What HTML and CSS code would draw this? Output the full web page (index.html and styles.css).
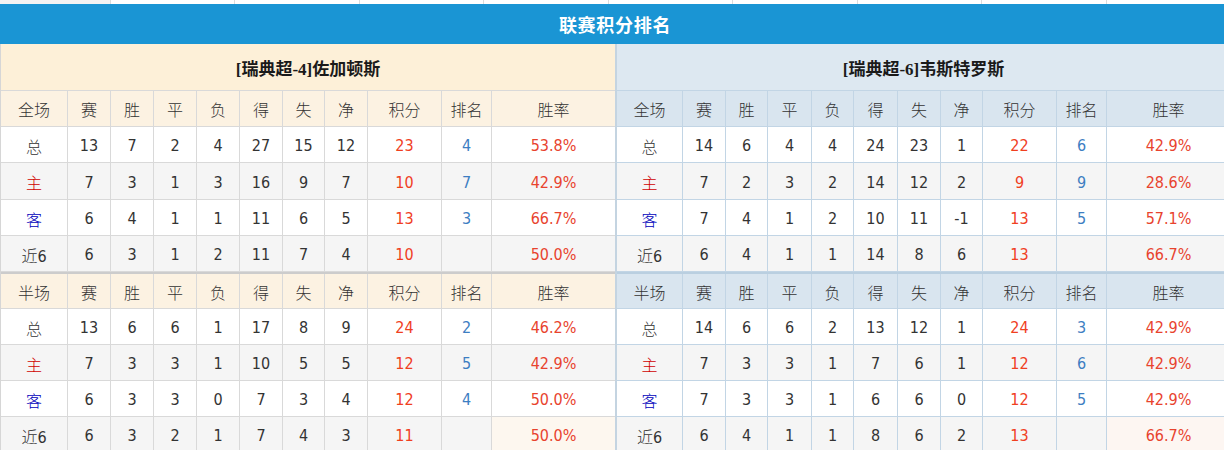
FILE: index.html
```html
<!DOCTYPE html>
<html lang="zh-CN">
<head>
<meta charset="utf-8">
<title>联赛积分排名</title>
<link rel="stylesheet" href="styles.css">
</head>
<body>
<div class="page">
  <div class="strip"><span></span><span></span><span></span><span></span><span></span><span></span><span></span><span></span><span></span><span></span></div>
  <div class="title">联赛积分排名</div>
  <div class="halves">
    <div class="side home">
      <div class="team">[瑞典超-4]佐加顿斯</div>
      <div class="sec">
        <div class="row head"><div>全场</div><div>赛</div><div>胜</div><div>平</div><div>负</div><div>得</div><div>失</div><div>净</div><div>积分</div><div>排名</div><div>胜率</div></div>
        <div class="row"><div class="lb">总</div><div>13</div><div>7</div><div>2</div><div>4</div><div>27</div><div>15</div><div>12</div><div class="pts">23</div><div class="rk">4</div><div class="pct">53.8%</div></div>
        <div class="row alt tall"><div class="lb h">主</div><div>7</div><div>3</div><div>1</div><div>3</div><div>16</div><div>9</div><div>7</div><div class="pts">10</div><div class="rk">7</div><div class="pct">42.9%</div></div>
        <div class="row"><div class="lb a">客</div><div>6</div><div>4</div><div>1</div><div>1</div><div>11</div><div>6</div><div>5</div><div class="pts">13</div><div class="rk">3</div><div class="pct">66.7%</div></div>
        <div class="row alt"><div class="lb">近6</div><div>6</div><div>3</div><div>1</div><div>2</div><div>11</div><div>7</div><div>4</div><div class="pts">10</div><div class="rk"></div><div class="pct">50.0%</div></div>
      </div>
      <div class="sec second">
        <div class="row head short"><div>半场</div><div>赛</div><div>胜</div><div>平</div><div>负</div><div>得</div><div>失</div><div>净</div><div>积分</div><div>排名</div><div>胜率</div></div>
        <div class="row"><div class="lb">总</div><div>13</div><div>6</div><div>6</div><div>1</div><div>17</div><div>8</div><div>9</div><div class="pts">24</div><div class="rk">2</div><div class="pct">46.2%</div></div>
        <div class="row alt"><div class="lb h">主</div><div>7</div><div>3</div><div>3</div><div>1</div><div>10</div><div>5</div><div>5</div><div class="pts">12</div><div class="rk">5</div><div class="pct">42.9%</div></div>
        <div class="row"><div class="lb a">客</div><div>6</div><div>3</div><div>3</div><div>0</div><div>7</div><div>3</div><div>4</div><div class="pts">12</div><div class="rk">4</div><div class="pct">50.0%</div></div>
        <div class="row alt"><div class="lb">近6</div><div>6</div><div>3</div><div>2</div><div>1</div><div>7</div><div>4</div><div>3</div><div class="pts">11</div><div class="rk"></div><div class="pct hl">50.0%</div></div>
      </div>
    </div>
    <div class="side away">
      <div class="team">[瑞典超-6]韦斯特罗斯</div>
      <div class="sec">
        <div class="row head"><div>全场</div><div>赛</div><div>胜</div><div>平</div><div>负</div><div>得</div><div>失</div><div>净</div><div>积分</div><div>排名</div><div>胜率</div></div>
        <div class="row"><div class="lb">总</div><div>14</div><div>6</div><div>4</div><div>4</div><div>24</div><div>23</div><div>1</div><div class="pts">22</div><div class="rk">6</div><div class="pct">42.9%</div></div>
        <div class="row alt tall"><div class="lb h">主</div><div>7</div><div>2</div><div>3</div><div>2</div><div>14</div><div>12</div><div>2</div><div class="pts">9</div><div class="rk">9</div><div class="pct">28.6%</div></div>
        <div class="row"><div class="lb a">客</div><div>7</div><div>4</div><div>1</div><div>2</div><div>10</div><div>11</div><div>-1</div><div class="pts">13</div><div class="rk">5</div><div class="pct">57.1%</div></div>
        <div class="row alt"><div class="lb">近6</div><div>6</div><div>4</div><div>1</div><div>1</div><div>14</div><div>8</div><div>6</div><div class="pts">13</div><div class="rk"></div><div class="pct">66.7%</div></div>
      </div>
      <div class="sec second">
        <div class="row head short"><div>半场</div><div>赛</div><div>胜</div><div>平</div><div>负</div><div>得</div><div>失</div><div>净</div><div>积分</div><div>排名</div><div>胜率</div></div>
        <div class="row"><div class="lb">总</div><div>14</div><div>6</div><div>6</div><div>2</div><div>13</div><div>12</div><div>1</div><div class="pts">24</div><div class="rk">3</div><div class="pct">42.9%</div></div>
        <div class="row alt"><div class="lb h">主</div><div>7</div><div>3</div><div>3</div><div>1</div><div>7</div><div>6</div><div>1</div><div class="pts">12</div><div class="rk">6</div><div class="pct">42.9%</div></div>
        <div class="row"><div class="lb a">客</div><div>7</div><div>3</div><div>3</div><div>1</div><div>6</div><div>6</div><div>0</div><div class="pts">12</div><div class="rk">5</div><div class="pct">42.9%</div></div>
        <div class="row alt"><div class="lb">近6</div><div>6</div><div>4</div><div>1</div><div>1</div><div>8</div><div>6</div><div>2</div><div class="pts">13</div><div class="rk"></div><div class="pct hl">66.7%</div></div>
      </div>
    </div>
  </div>
</div>
</body>
</html>
```

FILE: styles.css
```css
html, body {
  margin: 0;
  padding: 0;
  background: #ffffff;
  overflow: hidden;
}

.page {
  width: 1230px;
  font-family: "DejaVu Sans Condensed", "DejaVu Sans", "Noto Sans CJK SC", sans-serif;
  font-size: 16px;
  color: #333333;
}

.strip {
  display: grid;
  grid-template-columns: 110px repeat(9, 1fr);
  height: 4px;
}

.strip span {
  border-left: 1px solid #dcdcdc;
}

.strip span:first-child {
  border-left: none;
  background: #f3f3f3;
}

.title {
  height: 40px;
  background: #1a95d4;
  color: #ffffff;
  font-family: "Noto Sans CJK SC", sans-serif;
  font-weight: 700;
  font-size: 18px;
  display: flex;
  align-items: center;
  justify-content: center;
  letter-spacing: 0.7px;
}

.halves {
  display: flex;
}

.side {
  box-sizing: border-box;
}

.home {
  width: 615px;
  border-left: 1px solid #d6d6d6;
  --line: #d9d9d9;
  --thick: #cccccc;
  --team-bg: #fdf0d8;
  --head-bg: #fcf2e2;
  --cols: 67px 43px 43px 43px 43px 43px 42px 43px 74px 50px 1fr;
}

.away {
  width: 615px;
  border-left: 2px solid #c4d4e1;
  --line: #c2d5e5;
  --thick: #bacfe0;
  --team-bg: #dde8f1;
  --head-bg: #d9e5ef;
  --cols: 66px 43px 42px 44px 42px 44px 43px 42px 74px 50px 1fr;
}

.team {
  height: 46px;
  border-bottom: 1px solid var(--line);
  background: var(--team-bg);
  display: flex;
  align-items: center;
  justify-content: center;
  font-family: "Liberation Serif", "Noto Sans CJK SC", serif;
  font-weight: 700;
  font-size: 17px;
  color: #1a1a1a;
  padding-top: 1px;
  box-sizing: border-box;
  height: 47px;
}

.sec.second {
  border-top: 2px solid var(--thick);
}

.row {
  display: grid;
  grid-template-columns: var(--cols);
  height: 36px;
  box-sizing: border-box;
  border-bottom: 1px solid var(--line);
  background: #ffffff;
}

.row.tall {
  height: 37px;
}

.row.short {
  height: 35px;
}

.row.alt {
  background: #f5f5f5;
}

.row.head {
  background: var(--head-bg);
}

.row > div {
  display: flex;
  align-items: center;
  justify-content: center;
  border-right: 1px solid var(--line);
  padding-top: 2px;
}

.row.head > div {
  padding-top: 1px;
  font-weight: 300;
}

.row > .lb {
  font-weight: 300;
}

.row > div:last-child {
  border-right: none;
}

.h {
  color: #d00000;
}

.a {
  color: #0000bb;
}

.pts {
  color: #f0401f;
}

.rk {
  color: #3d7ec2;
}

.pct {
  color: #e8432e;
}

.home .pct.hl {
  background: #fdf7ef;
}

.away .pct.hl {
  background: #fdf6f2;
}
```
